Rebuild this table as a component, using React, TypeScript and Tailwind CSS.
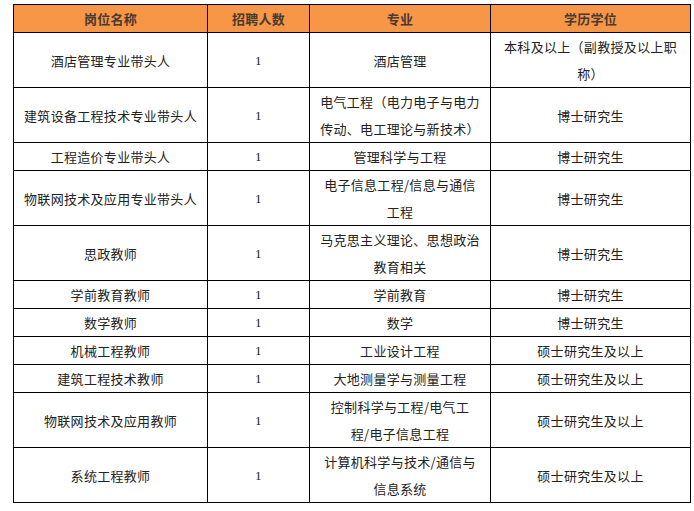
const rows: { name: string; count: string; major: string[]; degree: string[] }[] = [
  { name: '酒店管理专业带头人', count: '1', major: ['酒店管理'], degree: ['本科及以上（副教授及以上职', '称）'] },
  { name: '建筑设备工程技术专业带头人', count: '1', major: ['电气工程（电力电子与电力', '传动、电工理论与新技术）'], degree: ['博士研究生'] },
  { name: '工程造价专业带头人', count: '1', major: ['管理科学与工程'], degree: ['博士研究生'] },
  { name: '物联网技术及应用专业带头人', count: '1', major: ['电子信息工程/信息与通信', '工程'], degree: ['博士研究生'] },
  { name: '思政教师', count: '1', major: ['马克思主义理论、思想政治', '教育相关'], degree: ['博士研究生'] },
  { name: '学前教育教师', count: '1', major: ['学前教育'], degree: ['博士研究生'] },
  { name: '数学教师', count: '1', major: ['数学'], degree: ['博士研究生'] },
  { name: '机械工程教师', count: '1', major: ['工业设计工程'], degree: ['硕士研究生及以上'] },
  { name: '建筑工程技术教师', count: '1', major: ['大地测量学与测量工程'], degree: ['硕士研究生及以上'] },
  { name: '物联网技术及应用教师', count: '1', major: ['控制科学与工程/电气工', '程/电子信息工程'], degree: ['硕士研究生及以上'] },
  { name: '系统工程教师', count: '1', major: ['计算机科学与技术/通信与', '信息系统'], degree: ['硕士研究生及以上'] },
];

function Lines({ lines }: { lines: string[] }) {
  return (
    <>
      {lines.map((l, i) => (
        <div key={i}>{l}</div>
      ))}
    </>
  );
}

export default function App() {
  const cell = 'border border-black text-center align-middle px-1 whitespace-nowrap';
  return (
    <div
      className="w-[694px] h-[511px] bg-white pt-[4px] pl-[13px] text-[13px] leading-[27px] text-[#222] tracking-[0.3px]"
      style={{ fontFamily: '"Noto Sans CJK SC", "Noto Sans", sans-serif' }}
    >
      <table className="border-collapse w-[677px] table-fixed">
        <colgroup>
          <col className="w-[194px]" />
          <col className="w-[102px]" />
          <col className="w-[181px]" />
          <col className="w-[200px]" />
        </colgroup>
        <thead>
          <tr className="bg-[#f79646] text-[#4a3a32] font-bold">
            <th className={cell}>岗位名称</th>
            <th className={cell}>招聘人数</th>
            <th className={cell}>专业</th>
            <th className={cell}>学历学位</th>
          </tr>
        </thead>
        <tbody>
          {rows.map((r, i) => (
            <tr key={i}>
              <td className={cell}>{r.name}</td>
              <td className={cell} style={{ fontFamily: '"Liberation Serif", serif' }}>{r.count}</td>
              <td className={cell}>
                <Lines lines={r.major} />
              </td>
              <td className={cell}>
                <Lines lines={r.degree} />
              </td>
            </tr>
          ))}
        </tbody>
      </table>
    </div>
  );
}
